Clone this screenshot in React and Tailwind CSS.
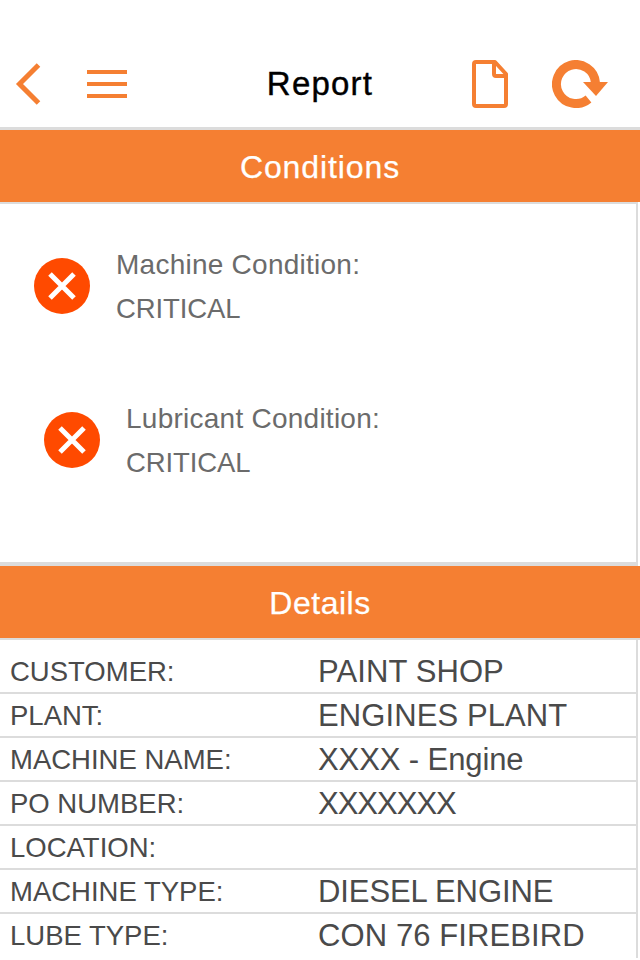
import React from "react";

const ORANGE = "#f57f32";

const details = [
  { name: "CUSTOMER:", val: "PAINT SHOP", track: "tracking-[0.1px]", row: "h-[54px] pt-[12px] border-b-2" },
  { name: "PLANT:", val: "ENGINES PLANT", track: "tracking-[0.1px]", row: "h-[44px] pt-[2px] border-b-2" },
  { name: "MACHINE NAME:", val: "XXXX - Engine", track: "-tracking-[0.1px]", row: "h-[44px] pt-[2px] border-b-2" },
  { name: "PO NUMBER:", val: "XXXXXXX", track: "-tracking-[1px]", row: "h-[44px] pt-[2px] border-b-2" },
  { name: "LOCATION:", val: "", track: "", row: "h-[44px] pt-[2px] border-b-2" },
  { name: "MACHINE TYPE:", val: "DIESEL ENGINE", track: "-tracking-[0.1px]", row: "h-[44px] pt-[2px] border-b-2" },
  { name: "LUBE TYPE:", val: "CON 76 FIREBIRD", track: "tracking-[0.1px]", row: "h-[44px] pb-[2px] pt-[2px]" },
];

const BackIcon = () => (
  <svg width="30" height="48" viewBox="0 0 30 48" fill="none" stroke={ORANGE} strokeWidth="5">
    <path d="M24.5 5 L5.5 24 L24.5 43" />
  </svg>
);

const MenuIcon = () => (
  <div className="flex flex-col gap-[8px] w-10">
    <div className="h-1 bg-[#f57f32]" />
    <div className="h-1 bg-[#f57f32]" />
    <div className="h-1 bg-[#f57f32]" />
  </div>
);

const DocIcon = () => (
  <svg width="36" height="48" viewBox="0 0 36 48" fill="none" stroke={ORANGE} strokeWidth="4" strokeLinejoin="round">
    <path d="M2 4 Q2 2 4 2 H23 L34 14 V44 Q34 46 32 46 H4 Q2 46 2 44 Z" />
    <path d="M22 2 V14 Q22 16 24 16 H34" />
  </svg>
);

const RefreshIcon = () => (
  <svg width="56" height="48" viewBox="0 0 56 48" fill="none">
    <path d="M36.5 39 A19.5 19.5 0 1 1 43.4 22.3" stroke={ORANGE} strokeWidth="9" />
    <path d="M31 22 H56 L44 36 Z" fill={ORANGE} />
  </svg>
);

const ErrorIcon = () => (
  <svg width="56" height="56" viewBox="0 0 56 56" className="shrink-0">
    <circle cx="28" cy="28" r="28" fill="#ff4a00" />
    <path d="M16 16 L40 40 M40 16 L16 40" stroke="#fff" strokeWidth="5" />
  </svg>
);

const SectionBar = ({ title, track }) => (
  <div className={`h-[72px] pt-[2px] bg-[#f57f32] flex items-center justify-center text-white text-[32px] [-webkit-text-stroke:0.25px_white] ${track}`}>
    {title}
  </div>
);

const Condition = ({ label, value, indent }) => (
  <div className={`flex items-center gap-[26px] ${indent ? "pl-[44px]" : "pl-[34px]"}`}>
    <ErrorIcon />
    <div className="pt-[2px] leading-[44px] text-[#6b6b6b]">
      <p className="text-[28px] tracking-[0.25px]">{label}</p>
      <p className="text-[27.5px] -tracking-[0.1px]">{value}</p>
    </div>
  </div>
);

export default function App() {
  return (
    <div className="w-[640px] h-[960px] overflow-hidden bg-white font-['Liberation_Sans',sans-serif]">
      {/* header */}
      <header className="h-[130px] pt-[40px] border-b-[3px] border-[#dcdcdc] grid grid-cols-3 items-center">
        <div className="flex items-center gap-[43px] pl-[14px]">
          <BackIcon />
          <MenuIcon />
        </div>
        <h1 className="text-center text-[33px] text-black tracking-[1.2px] [-webkit-text-stroke:0.4px_black]">Report</h1>
        <div className="flex items-center justify-end gap-[44px] pr-[32px]">
          <DocIcon />
          <RefreshIcon />
        </div>
      </header>

      <SectionBar title="Conditions" track="tracking-[0.9px]" />

      <section className="h-[364px] pt-[37px] border-t-2 border-b-[4px] border-r-2 mr-[2px] border-[#dcdcdc] flex flex-col gap-[64px]">
        <Condition label="Machine Condition:" value="CRITICAL" />
        <Condition label="Lubricant Condition:" value="CRITICAL" indent />
      </section>

      <SectionBar title="Details" track="tracking-[0.5px]" />

      <div className="border-t-2 border-[#dcdcdc]">
        <div className="mr-[2px] border-r-2 border-[#dcdcdc]">
          {details.map((d) => (
            <div key={d.name} className={`flex items-center pl-[10px] border-[#dcdcdc] ${d.row}`}>
              <span className="w-[308px] text-[27.5px] text-[#4a4a4a]">{d.name}</span>
              <span className={`text-[31px] text-[#4a4a4a] ${d.track}`}>{d.val}</span>
            </div>
          ))}
        </div>
      </div>
    </div>
  );
}
